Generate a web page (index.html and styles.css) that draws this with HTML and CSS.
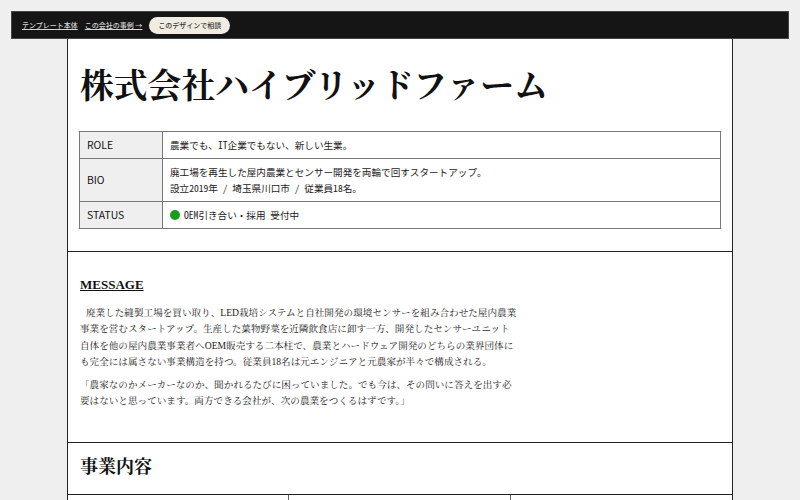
FILE: index.html
```html
<!DOCTYPE html>
<html lang="ja">
<head>
    <meta charset="utf-8" />
    <meta name="viewport" content="width=device-width, initial-scale=1.0" />
    <title>株式会社ハイブリッドファーム</title>
    <link rel="stylesheet" href="styles.css">
</head>
<body>
    <div class="topbar">
        <a href="#" class="topbar-link">テンプレート本体</a>
        <a href="#" class="topbar-link">この会社の事例 →</a>
        <span class="topbar-btn">このデザインで相談</span>
    </div>
    <div class="page">
        <section class="block block-head">
            <h1 class="company-name">株式会社ハイブリッドファーム</h1>
            <table class="profile">
                <tr>
                    <th>ROLE</th>
                    <td>農業でも、IT企業でもない、新しい生業。</td>
                </tr>
                <tr>
                    <th>BIO</th>
                    <td>廃工場を再生した屋内農業とセンサー開発を両輪で回すスタートアップ。<br />設立2019年 / 埼玉県川口市 / 従業員18名。</td>
                </tr>
                <tr>
                    <th>STATUS</th>
                    <td><i class="status-dot"></i>OEM引き合い・採用 受付中</td>
                </tr>
            </table>
        </section>
        <section class="block block-message">
            <h2 class="message-title">MESSAGE</h2>
            <p class="lead">廃業した縫製工場を買い取り、LED栽培システムと自社開発の環境センサーを組み合わせた屋内農業事業を営むスタートアップ。生産した葉物野菜を近隣飲食店に卸す一方、開発したセンサーユニット自体を他の屋内農業事業者へOEM販売する二本柱で、農業とハードウェア開発のどちらの業界団体にも完全には属さない事業構造を持つ。従業員18名は元エンジニアと元農家が半々で構成される。</p>
            <p>「農家なのかメーカーなのか、聞かれるたびに困っていました。でも今は、その問いに答えを出す必要はないと思っています。両方できる会社が、次の農業をつくるはずです。」</p>
        </section>
        <section class="block block-business">
            <h2 class="section-title">事業内容</h2>
        </section>
        <div class="business-grid">
            <div class="business-item"></div>
            <div class="business-item"></div>
            <div class="business-item"></div>
        </div>
    </div>
</body>
</html>
```

FILE: styles.css
```css
* {
    margin: 0;
    padding: 0;
    box-sizing: border-box;
}

html {
    font-size: 16px;
}

body {
    padding: 11px 11px 0;
    background: #efefef;
    color: #111;
    font-family: "Liberation Serif", "Noto Serif CJK JP", "Noto Sans CJK JP", serif;
}

/* top bar */
.topbar {
    display: flex;
    align-items: center;
    gap: 7px;
    height: 28px;
    padding: 0 10px;
    background: #151515;
    border: 1px solid #444;
    font-family: "Noto Sans CJK JP", sans-serif;
    font-size: 7px;
}

.topbar-link {
    color: #d6d6d6;
    text-decoration: underline;
    font-weight: 500;
}

.topbar-btn {
    display: inline-block;
    height: 17px;
    line-height: 17px;
    padding: 0 9px;
    border-radius: 9px;
    background: #f1ece2;
    color: #333;
    font-weight: 500;
}

/* page */
.page {
    width: 666px;
    margin: 0 auto;
    background: #fff;
    border: 1px solid #222;
    border-top: none;
}

.block {
    border-bottom: 1px solid #222;
}

.block-head {
    padding: 28px 11px 22px;
}

.company-name {
    padding-left: 1px;
    font-size: 33.8px;
    line-height: 40px;
    font-weight: bold;
    margin-bottom: 24px;
}

.profile {
    width: 100%;
    border-collapse: collapse;
    font-size: 9.6px;
}

    .profile th,
    .profile td {
        border: 1px solid #777;
        padding: 5px 7px;
        line-height: 16px;
        text-align: left;
        vertical-align: middle;
    }

    .profile th {
        width: 83px;
        background: #efefef;
        font-family: "Noto Sans CJK JP", sans-serif;
        font-weight: normal;
        font-size: 10.4px;
    }

    .profile td {
        font-family: "Noto Sans Mono CJK JP", "Noto Sans CJK JP", monospace;
        font-weight: 500;
        color: #222;
    }

.status-dot {
    display: inline-block;
    width: 10px;
    height: 10px;
    margin-right: 4px;
    vertical-align: -1px;
    border-radius: 50%;
    background: #1a9e1a;
}

.block-message {
    padding: 24px 12px 24px;
}

.message-title {
    font-size: 13px;
    line-height: 18px;
    font-weight: bold;
    text-decoration: underline;
    margin-bottom: 11px;
}

.block-message p {
    max-width: 439px;
    font-size: 9.6px;
    line-height: 1.7;
    margin-bottom: 6.7px;
    color: #222;
}

    .block-message p.lead {
        text-indent: 6px;
    }

    .block-message p:last-child {
        margin-bottom: 9px;
    }

.block-business {
    padding: 13px 12px 15px;
}

.section-title {
    font-size: 18px;
    line-height: 23px;
    font-weight: bold;
}

.business-grid {
    display: grid;
    grid-template-columns: repeat(3, 1fr);
}

.business-item {
    min-height: 90px;
    border-right: 1px solid #666;
}

    .business-item:last-child {
        border-right: none;
    }
```
